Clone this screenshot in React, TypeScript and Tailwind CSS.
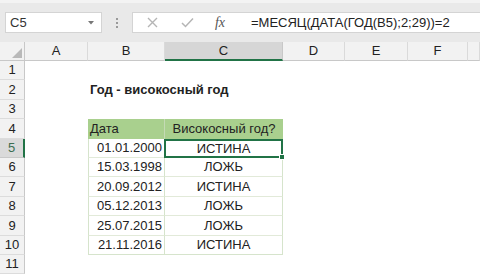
const cols = ["A", "B", "C", "D", "E", "F", ""];

const data: [string, string][] = [
  ["01.01.2000", "ИСТИНА"],
  ["15.03.1998", "ЛОЖЬ"],
  ["20.09.2012", "ИСТИНА"],
  ["05.12.2013", "ЛОЖЬ"],
  ["25.07.2015", "ЛОЖЬ"],
  ["21.11.2016", "ИСТИНА"],
];

function RowHead({ n, selected = false }: { n: number; selected?: boolean }) {
  return (
    <div
      className={
        selected
          ? "flex items-center justify-center bg-[#dadada] border-r-2 border-r-[#217346] border-b border-b-[#c8c8c8] text-[#3c6e52]"
          : "flex items-center justify-center bg-[#f2f2f2] border-r border-r-[#c8c8c8] border-b border-b-[#dcdcdc] text-[#222]"
      }
    >
      {n}
    </div>
  );
}

function Empty({ n }: { n: number }) {
  return <div className="col-span-7" data-row={n} />;
}

export default function App() {
  return (
    <div className="w-[480px] h-[277px] overflow-hidden bg-white text-[13px] text-[#222]" style={{ fontFamily: '"Liberation Sans", Arial, sans-serif' }}>
      {/* formula bar */}
      <div className="h-[42px] bg-[#e9e9e9] border-t-[3px] border-t-[#f3f3f3] flex items-start pt-[9px] pl-[5px]">
        <div className="w-[97px] h-[21px] bg-white border border-[#d4d4d4] flex items-center pl-[4px] pr-[7px]">
          <span className="flex-1 text-[#333]">C5</span>
          <svg width="6" height="4" viewBox="0 0 6 4">
            <path d="M0 0 L6 0 L3 3.5 Z" fill="#777" />
          </svg>
        </div>
        <div className="w-[30px] h-[21px] flex flex-col items-center justify-center gap-[2px]">
          <span className="w-[2px] h-[2px] bg-[#9a9a9a]" />
          <span className="w-[2px] h-[2px] bg-[#9a9a9a]" />
          <span className="w-[2px] h-[2px] bg-[#9a9a9a]" />
        </div>
        <div className="flex-1 h-[21px] bg-white border border-[#d4d4d4] border-r-0 flex items-center">
          <div className="w-[38px] flex justify-center">
            <svg width="11" height="11" viewBox="0 0 11 11">
              <path d="M1 1 L10 10 M10 1 L1 10" stroke="#b5b5b5" strokeWidth="1.4" />
            </svg>
          </div>
          <div className="w-[32px] flex justify-center">
            <svg width="13" height="11" viewBox="0 0 13 11">
              <path d="M1 6 L4.5 9.5 L12 1.5" stroke="#b5b5b5" strokeWidth="1.5" fill="none" />
            </svg>
          </div>
          <div className="w-[34px] flex justify-center italic text-[14px] text-[#555]" style={{ fontFamily: '"Liberation Serif", serif' }}>
            fx
          </div>
          <div className="pl-[14px] text-[#222] whitespace-nowrap">=МЕСЯЦ(ДАТА(ГОД(B5);2;29))=2</div>
        </div>
      </div>

      {/* sheet */}
      <div className="grid grid-cols-[25px_63px_77px_118px_62px_63px_60px_1fr] grid-rows-[19px_repeat(11,19.4px)]">
        {/* corner */}
        <div className="bg-[#f2f2f2] border-r border-r-[#c8c8c8] border-b border-b-[#c8c8c8] flex items-end justify-end pr-[2px] pb-[2px]">
          <svg width="10" height="10" viewBox="0 0 10 10">
            <path d="M10 0 L10 10 L0 10 Z" fill="#b9b9b9" />
          </svg>
        </div>
        {cols.map((c, i) =>
          c === "C" ? (
            <div key={i} className="bg-[#d6d6d6] border-b-2 border-b-[#217346] border-r border-r-[#c8c8c8] flex items-center justify-center text-[#222]">
              {c}
            </div>
          ) : (
            <div key={i} className="bg-[#f2f2f2] border-b border-b-[#c8c8c8] border-r border-r-[#dadada] flex items-center justify-center text-[#222]">
              {c}
            </div>
          )
        )}

        <RowHead n={1} />
        <Empty n={1} />

        <RowHead n={2} />
        <div />
        <div className="col-span-6 flex items-center pl-[2px] font-bold whitespace-nowrap">Год - високосный год</div>

        <RowHead n={3} />
        <Empty n={3} />

        <RowHead n={4} />
        <div />
        <div className="bg-[#a9d08e] flex items-center pl-[2px] border-r border-r-[#c4dab5]">Дата</div>
        <div className="bg-[#a9d08e] flex items-center justify-center">Високосный год?</div>
        <div className="col-span-4" />

        {data.map(([d, v], i) => {
          const row = i + 5;
          const last = i === data.length - 1;
          return [
            <RowHead key={`h${row}`} n={row} selected={row === 5} />,
            <div key={`a${row}`} />,
            <div
              key={`b${row}`}
              className={`flex items-center justify-end pr-[2px] border-l border-l-[#d6e4cc] border-r border-r-[#d6e4cc] ${last ? "border-b border-b-[#d6e4cc]" : "border-b border-b-[#e2ead9]"}`}
            >
              {d}
            </div>,
            row === 5 ? (
              <div key={`c${row}`} className="relative flex items-center justify-center border-2 border-[#217346] -ml-px">
                {v}
                <span className="absolute -right-[4px] -bottom-[4px] w-[6px] h-[6px] bg-[#217346] border border-white" />
              </div>
            ) : (
              <div
                key={`c${row}`}
                className={`flex items-center justify-center border-r border-r-[#d6e4cc] ${last ? "border-b border-b-[#d6e4cc]" : "border-b border-b-[#e2ead9]"}`}
              >
                {v}
              </div>
            ),
            <div key={`r${row}`} className="col-span-4" />,
          ];
        })}

        <RowHead n={11} />
        <Empty n={11} />
      </div>
    </div>
  );
}
